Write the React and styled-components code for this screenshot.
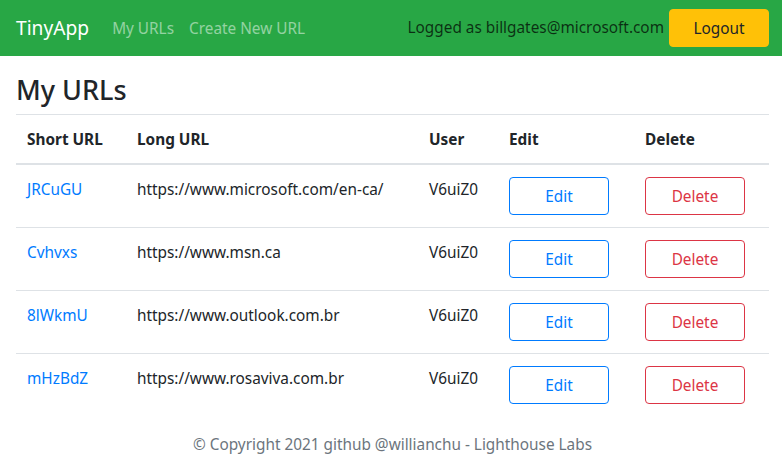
import styled, { createGlobalStyle } from 'styled-components'

const GlobalStyle = createGlobalStyle`
  * { box-sizing: border-box; }
  body {
    margin: 0;
    font-family: "Segoe UI", "Noto Sans", "Open Sans", sans-serif;
    font-size: 15.35px;
    line-height: 24px;
    color: #212529;
    background: #fff;
  }
`

const Nav = styled.nav`
  height: 56px;
  background-color: #28a745;
  display: flex;
  align-items: center;
  padding: 0 13px 0 16px;
`

const Brand = styled.a`
  font-size: 19.2px;
  color: #fff;
  margin-right: 23px;
  text-decoration: none;
`

const NavLink = styled.a`
  color: rgba(255, 255, 255, 0.5);
  margin-right: 15px;
  text-decoration: none;
`

const Spacer = styled.div`
  flex: 1;
`

const NavText = styled.span`
  color: rgba(0, 0, 0, 0.72);
  margin-right: 5px;
  margin-top: -3px;
`

const Button = styled.button`
  font-family: inherit;
  font-size: 15.35px;
  width: 100px;
  height: 38px;
  border-radius: 4px;
  cursor: pointer;
  background: ${p => p.$fill || 'transparent'};
  color: ${p => p.$color};
  border: 1px solid ${p => p.$border || p.$color};
`

const Main = styled.main`
  padding: 18px 13px 0 16px;
`

const Title = styled.h2`
  margin: 0 0 8px;
  font-size: 27px;
  font-weight: 500;
  line-height: 1.2;
`

const Table = styled.table`
  width: 100%;
  border-collapse: collapse;
`

const Th = styled.th`
  text-align: left;
  font-weight: 700;
  padding: 12px 11px;
  border-top: 1px solid #dee2e6;
  border-bottom: 2px solid #dee2e6;
  width: ${p => p.$w};
`

const Td = styled.td`
  padding: 12px 11px;
  vertical-align: top;
  border-top: 1px solid #dee2e6;
`

const Row = styled.tr`
  &:first-child td { border-top: none; }
`

const Short = styled.a`
  color: #007bff;
  text-decoration: none;
`

const Footer = styled.footer`
  text-align: center;
  color: #6c757d;
  padding-top: 16px;
`

const urls = [
  ['JRCuGU', 'https://www.microsoft.com/en-ca/'],
  ['Cvhvxs', 'https://www.msn.ca'],
  ['8lWkmU', 'https://www.outlook.com.br'],
  ['mHzBdZ', 'https://www.rosaviva.com.br'],
]

export default function App() {
  return (
    <>
      <GlobalStyle />
      <Nav>
        <Brand href="#">TinyApp</Brand>
        <NavLink href="#">My URLs</NavLink>
        <NavLink href="#">Create New URL</NavLink>
        <Spacer />
        <NavText>Logged as billgates@microsoft.com</NavText>
        <Button $fill="#ffc107" $border="#ffc107" $color="#212529">Logout</Button>
      </Nav>
      <Main>
        <Title>My URLs</Title>
        <Table>
          <thead>
            <tr>
              <Th $w="110px">Short URL</Th>
              <Th $w="292px">Long URL</Th>
              <Th $w="80px">User</Th>
              <Th $w="136px">Edit</Th>
              <Th>Delete</Th>
            </tr>
          </thead>
          <tbody>
            {urls.map(([s, l]) => (
              <Row key={s}>
                <Td><Short href="#">{s}</Short></Td>
                <Td>{l}</Td>
                <Td>V6uiZ0</Td>
                <Td><Button $color="#007bff">Edit</Button></Td>
                <Td><Button $color="#dc3545">Delete</Button></Td>
              </Row>
            ))}
          </tbody>
        </Table>
        <Footer>© Copyright 2021 github @willianchu - Lighthouse Labs</Footer>
      </Main>
    </>
  )
}
